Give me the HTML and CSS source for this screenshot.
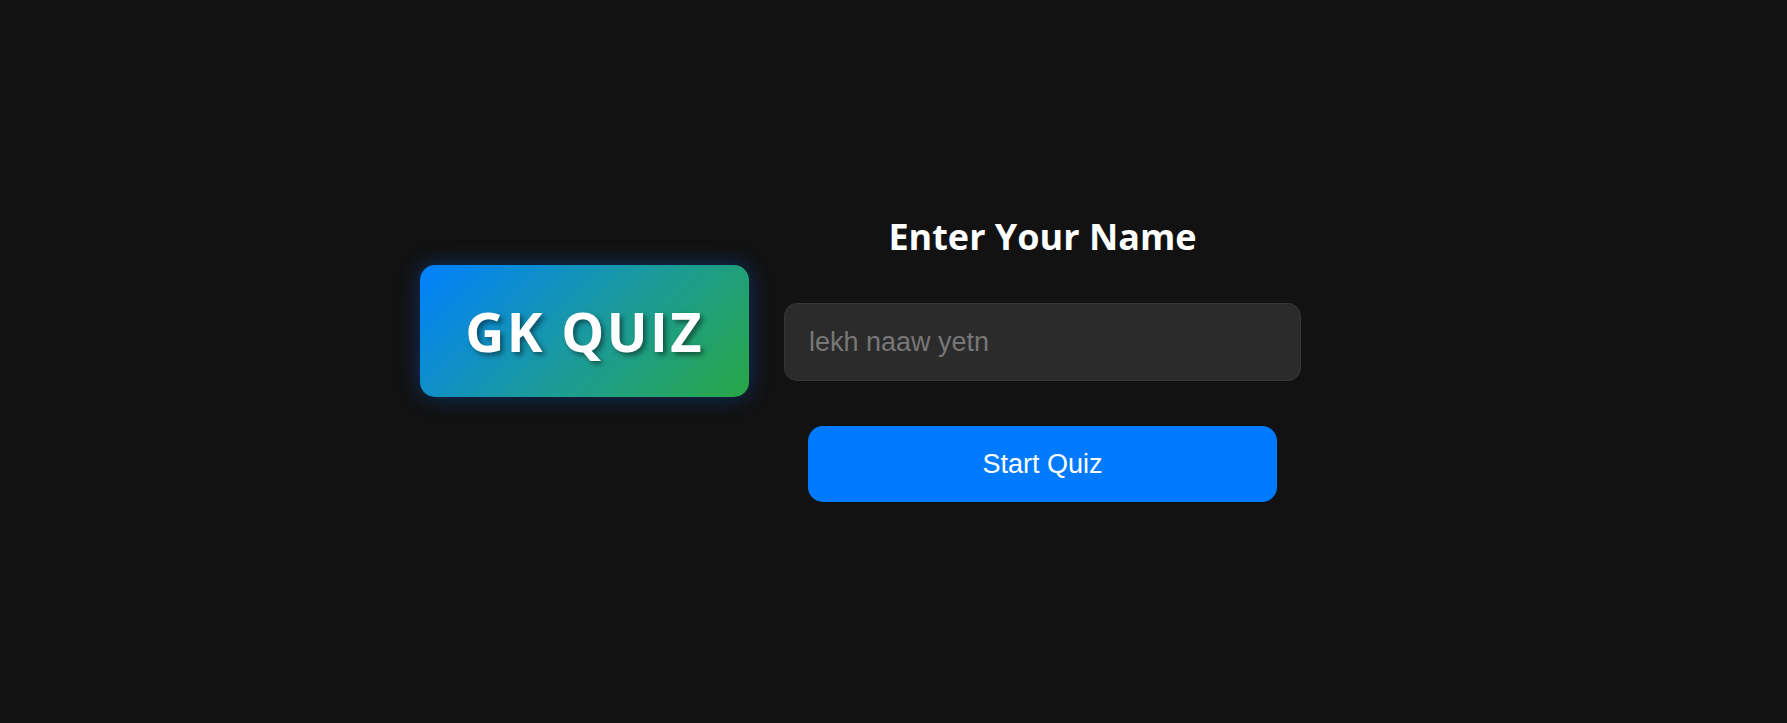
FILE: index.html
```html
<!DOCTYPE html>
<html lang="en">
<head>
<meta charset="utf-8">
<title>GK Quiz</title>
<link rel="stylesheet" href="styles.css">
</head>
<body>
  <main class="wrap">
    <div class="logo"><span class="logo-text">GK QUIZ</span></div>
    <section class="form">
      <h1 class="title">Enter Your Name</h1>
      <input class="name-input" type="text" placeholder="lekh naaw yetn">
      <button class="start-btn" type="button">Start Quiz</button>
    </section>
  </main>
</body>
</html>
```

FILE: styles.css
```css
html, body {
  margin: 0;
  padding: 0;
}
body {
  background: #121212;
  height: 100vh;
  display: flex;
  justify-content: center;
  align-items: center;
  font-family: "Liberation Sans", Arial, sans-serif;
}
.wrap {
  display: flex;
  align-items: center;
  gap: 35px;
  padding-right: 66px;
}
.logo {
  width: 329px;
  height: 132px;
  box-sizing: border-box;
  border-radius: 15px;
  background: linear-gradient(135deg, #0080ff 0%, #1a9aa0 50%, #28a745 100%);
  box-shadow: 0 0 22px rgba(0, 110, 255, 0.35);
  display: flex;
  align-items: center;
  justify-content: center;
  margin-bottom: 61px;
}
.logo-text {
  font-family: "Open Sans", "Noto Sans", sans-serif;
  font-weight: 700;
  font-size: 54px;
  letter-spacing: 2.4px;
  color: #ffffff;
  text-shadow: 3px 3px 5px rgba(0, 0, 0, 0.45);
}
.form {
  width: 517px;
  display: flex;
  flex-direction: column;
  align-items: center;
  margin-bottom: 6px;
}
.title {
  margin: 0 0 44px 0;
  font-family: "Open Sans", "Noto Sans", sans-serif;
  font-weight: 700;
  font-size: 36px;
  line-height: 44px;
  color: #ffffff;
}
.name-input {
  width: 517px;
  height: 78px;
  box-sizing: border-box;
  padding: 0 24px;
  border: 1px solid #363636;
  border-radius: 13px;
  background: #2b2b2b;
  color: #ffffff;
  font-family: "Liberation Sans", Arial, sans-serif;
  font-size: 27px;
  outline: none;
}
.name-input::placeholder {
  color: #777777;
}
.start-btn {
  margin-top: 45px;
  width: 469px;
  height: 76px;
  border: none;
  border-radius: 15px;
  background: #007bff;
  color: #ffffff;
  font-family: "Liberation Sans", Arial, sans-serif;
  font-size: 27px;
  cursor: pointer;
}
```
